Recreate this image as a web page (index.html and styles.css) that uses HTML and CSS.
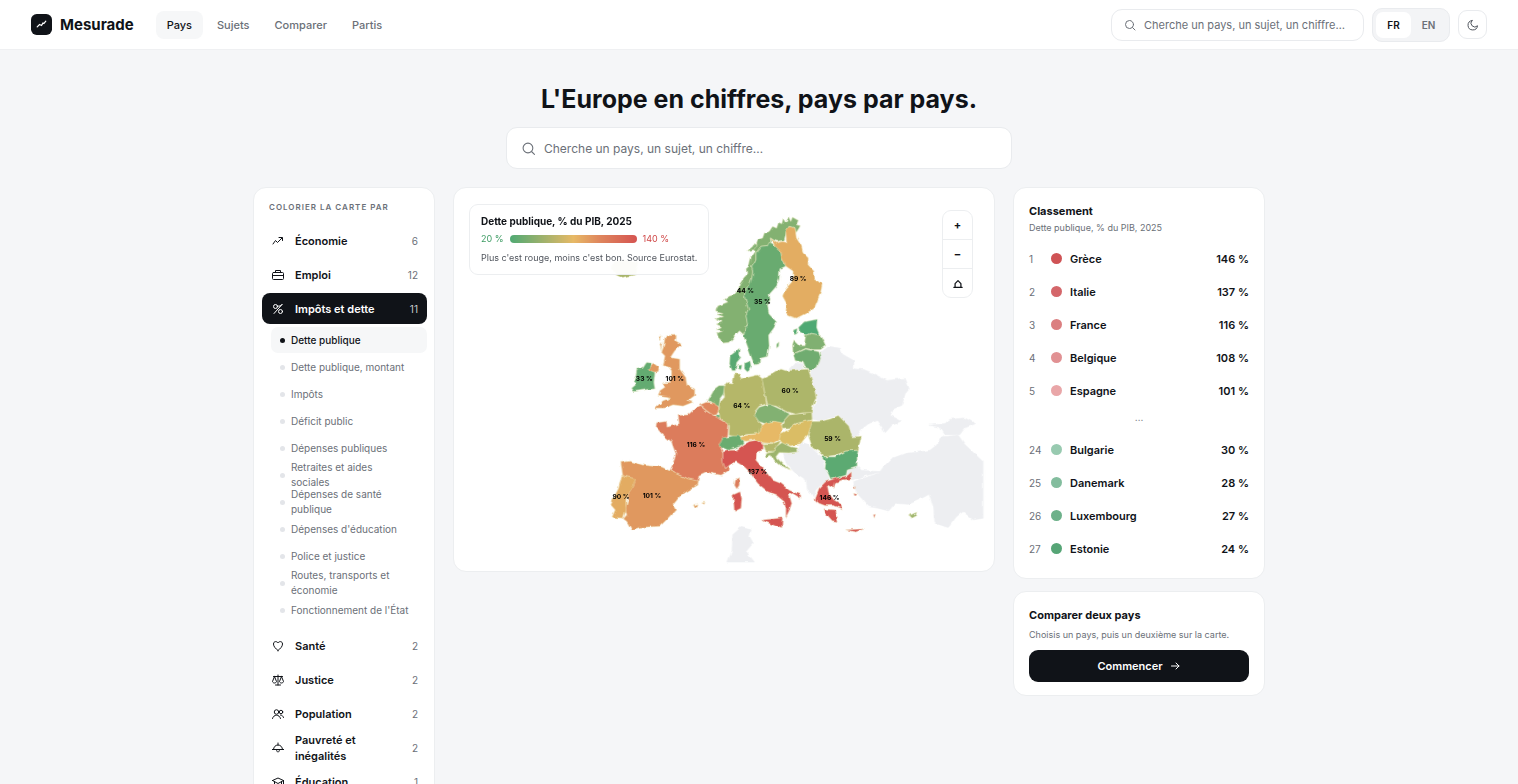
FILE: index.html
```html
<!DOCTYPE html>
<html lang="fr">
<head>
  <meta charset="UTF-8">
  <meta name="viewport" content="width=device-width, initial-scale=1.0">
  <title>Mesurade - L'Europe en chiffres</title>
  <link rel="stylesheet" href="styles.css">
</head>
<body>
  <header class="topbar">
    <a class="brand" href="#">
      <svg class="logo" viewBox="0 0 22 22"><rect width="22" height="22" rx="6" fill="#101318"/><path d="M6.500 13.500l2.500-2.500 2 1 1.500-2.500 1 .5 2-2.500" fill="none" stroke="#fff" stroke-width="1.300" stroke-linecap="round"/></svg>
      Mesurade
    </a>
    <nav class="nav">
      <a class="active" href="#">Pays</a>
      <a href="#">Sujets</a>
      <a href="#">Comparer</a>
      <a href="#">Partis</a>
    </nav>
    <label class="search search-small">
      <svg class="icon" viewBox="0 0 24 24"><circle cx="11" cy="11" r="8"/><path d="M17 17l5 5"/></svg>
      <input type="text" placeholder="Cherche un pays, un sujet, un chiffre…" aria-label="Recherche">
    </label>
    <div class="lang">
      <button class="on">FR</button>
      <button>EN</button>
    </div>
    <button class="theme" aria-label="Thème">
      <svg class="icon" viewBox="0 0 24 24"><path d="M10 3a7 7 0 0 0 11 10.500A9.500 9.500 0 1 1 10 3z"/></svg>
    </button>
  </header>

  <main class="page">
    <h1>L'Europe en chiffres, pays par pays.</h1>
    <label class="search search-big">
      <svg class="icon" viewBox="0 0 24 24"><circle cx="11" cy="11" r="9"/><path d="M18 18l5 5"/></svg>
      <input type="text" placeholder="Cherche un pays, un sujet, un chiffre…" aria-label="Recherche principale">
    </label>

    <div class="columns">
      <aside class="card topics">
        <h2>Colorier la carte par</h2>
        <button class="topic">
          <svg class="icon" viewBox="0 0 24 24"><path d="M2 18l5-7 4 4 9-9M14 5h7v6"/></svg>
          <span>Économie</span><small>6</small>
        </button>
        <button class="topic">
          <svg class="icon" viewBox="0 0 24 24"><rect x="1" y="7" width="22" height="14" rx="2"/><path d="M7 7V3h10v4M1 13h22"/></svg>
          <span>Emploi</span><small>12</small>
        </button>
        <button class="topic active">
          <svg class="icon" viewBox="0 0 24 24"><circle cx="7" cy="7" r="4"/><circle cx="17" cy="17" r="4"/><path d="M20 3L4 21M11 6c4 1 7 0 9-3"/></svg>
          <span>Impôts et dette</span><small>11</small>
        </button>
        <ul class="subtopics">
          <li><a class="active" href="#">Dette publique</a></li>
          <li><a href="#">Dette publique, montant</a></li>
          <li><a href="#">Impôts</a></li>
          <li><a href="#">Déficit public</a></li>
          <li><a href="#">Dépenses publiques</a></li>
          <li><a href="#">Retraites et aides sociales</a></li>
          <li><a href="#">Dépenses de santé publique</a></li>
          <li><a href="#">Dépenses d'éducation</a></li>
          <li><a href="#">Police et justice</a></li>
          <li><a href="#">Routes, transports et économie</a></li>
          <li><a href="#">Fonctionnement de l'État</a></li>
        </ul>
        <button class="topic">
          <svg class="icon" viewBox="0 0 24 24"><path d="M12 21C7 17 3 13 3 8c0-6 7-6 9-2 2-4 9-4 9 2 0 5-4 9-9 13z"/></svg>
          <span>Santé</span><small>2</small>
        </button>
        <button class="topic">
          <svg class="icon" viewBox="0 0 24 24"><path d="M12 2v20M7 22h10M3 5h18M5 5L1 15c1 4 7 4 8 0L5 5zM19 5l-4 10c1 4 7 4 8 0L19 5z"/></svg>
          <span>Justice</span><small>2</small>
        </button>
        <button class="topic">
          <svg class="icon" viewBox="0 0 24 24"><circle cx="9" cy="8" r="4.500"/><circle cx="18" cy="8" r="3.500"/><path d="M1 21c2-9 14-9 16 0M17 14c3 0 5 2 6 5"/></svg>
          <span>Population</span><small>2</small>
        </button>
        <button class="topic">
          <svg class="icon" viewBox="0 0 24 24"><path d="M0 15h24M3 15c0-5 4-9 9-9s9 4 9 9M12 6V2M9 15c0 7 6 7 6 0"/></svg>
          <span>Pauvreté et inégalités</span><small>2</small>
        </button>
        <button class="topic">
          <svg class="icon" viewBox="0 0 24 24"><path d="M1 9l11-5 11 5-11 6L1 9zM5 11v7c4 4 10 4 14 0v-7M23 9v7"/></svg>
          <span>Éducation</span><small>1</small>
        </button>
      </aside>

      <section class="card map">
        <svg class="europe" viewBox="0 0 1629 1155" role="img" aria-label="Carte de la dette publique en Europe">
          <defs>
            <filter id="coast" x="0" y="0" width="100%" height="100%" filterUnits="userSpaceOnUse">
              <feTurbulence type="fractalNoise" baseFrequency="0.06" numOctaves="1" seed="4"/>
              <feDisplacementMap in="SourceGraphic" scale="11" xChannelSelector="R" yChannelSelector="G"/>
            </filter>
          </defs>
          <g class="land" filter="url(#coast)">
            <!-- no data -->
            <g class="empty">
              <g transform="translate(861 366)">
                <path d="M212 205L218 180 240 170 245 130 270 112 305 118 310 135 345 155 345 180 375 182 395 190 425 205 445 215 500 208 512 240 500 255 490 290 465 300 455 320 490 338 460 350 440 372 430 358 415 335 390 345 370 360 345 395 335 380 315 340 298 318 245 337 215 330 218 310 235 270 222 235z"/>
                <path d="M150 180L168 162 192 165 196 182 155 186z"/>
                <path d="M572 350L620 345 635 332 680 328 712 345 680 358 665 378 620 378 605 355z"/>
              </g>
              <g transform="translate(801 696)">
                <path d="M188 105L235 100 245 70 268 78 290 100 308 115 318 150 325 165 330 185 305 200 290 215 285 235 265 215 262 185 225 160 205 140z"/>
                <path d="M382 170L390 155 415 145 425 155 460 158 490 160 440 172 402 185z"/>
                <path d="M405 190L430 180 480 165 495 145 520 120 560 105 605 100 635 95 655 80 670 55 720 50 740 78 795 130 795 300 765 305 735 280 715 295 690 328 650 315 645 260 632 228 600 245 570 258 530 255 510 278 480 270 450 265 420 230 408 210z"/>
                <path d="M40 350L65 328 95 335 90 355 102 375 80 400 105 432 25 432 38 400z"/>
              </g>
            </g>
            <!-- north -->
            <g transform="translate(711 36)">
              <path fill="#83b171" d="M88 420L100 432 118 430 135 412 150 395 158 402 163 408 168 385 175 375 170 350 178 330 172 310 165 290 168 270 180 258 188 235 190 215 187 200 200 180 200 160 215 140 235 138 245 125 243 115 255 122 265 125 285 122 292 95 300 80 318 85 320 100 328 88 334 78 322 75 328 62 310 52 305 65 298 50 290 70 282 55 278 72 268 68 262 85 250 80 240 95 225 100 220 115 205 120 200 135 190 150 198 155 185 175 180 195 170 205 172 225 160 240 150 255 148 270 135 285 120 290 105 300 115 308 85 320 78 335 100 340 80 345 102 352 78 358 98 368 80 375 96 382 80 390 100 395 82 402z"/>
              <path fill="#83b171" d="M172 155L190 140 196 128 204 134 194 150z"/>
              <path fill="#69ab70" d="M240 128L262 140 275 155 278 175 290 200 272 208 270 240 262 260 240 285 243 300 235 320 240 345 262 368 255 385 238 408 240 440 235 472 212 478 210 495 195 498 188 480 172 435 163 412 168 385 175 378 170 350 178 330 172 310 165 290 168 270 180 258 188 235 190 215 187 200 200 180 200 160 215 140 235 138zM262 435L270 428 268 442 262 447z"/>
              <path fill="#e3ad62" d="M243 115L262 130 280 125 292 128 290 95 300 80 318 85 322 115 338 140 342 160 358 175 357 195 375 215 378 238 400 255 395 280 385 305 375 328 355 340 322 357 300 350 290 340 292 312 280 290 288 270 310 245 312 215 290 200 278 175 275 155 258 140z"/>
              <path fill="#50a973" d="M328 385L345 368 385 360 383 385 392 408 365 402 350 408 332 398zM313 392L325 388 322 402 312 408z"/>
              <path fill="#80b071" d="M310 440L315 425 330 440 345 440 350 408 368 403 392 408 400 415 410 440 395 452 372 452 350 448 325 460 312 462z"/>
              <path fill="#6fac70" d="M312 462L328 460 350 450 390 458 395 475 385 505 365 512 348 505 342 490 318 485z"/>
              <path fill="#58a972" d="M122 470L135 460 150 447 148 470 155 475 142 490 138 515 128 515 120 495zM145 500L158 498 155 512 148 510zM165 492L182 485 185 500 175 520 165 510z"/>
            </g>
            <!-- west and centre -->
            <g transform="translate(441 396)">
              <path fill="#b5b769" d="M405 165L420 165 425 182 445 175 475 168 490 180 495 215 502 255 480 262 465 280 475 305 490 318 478 345 440 348 415 355 388 350 390 320 360 300 358 275 362 250 375 235 372 205 385 190 400 192z"/>
              <path fill="#adb66b" d="M488 180L520 165 545 150 560 155 628 150 642 195 652 235 640 265 638 282 610 282 590 287 565 280 530 262 505 258 495 215z"/>
              <path fill="#82b172" d="M463 285L480 265 510 256 530 265 572 285 555 305 545 315 520 308 505 318 478 308z"/>
              <path fill="#abb56b" d="M545 325L555 305 570 288 600 285 638 280 640 303 620 308 590 315 570 330 550 332z"/>
              <path fill="#e7b966" d="M418 358L440 350 478 345 482 325 500 312 525 308 545 312 550 335 543 360 520 375 490 372 465 362 440 368 420 362z"/>
              <path fill="#dabd65" d="M545 345L570 332 592 315 620 307 640 305 642 320 625 350 605 375 575 382 550 375 540 362z"/>
              <path fill="#b3b76a" d="M492 375L520 375 545 365 540 375 525 392 528 400 500 402z"/>
              <path fill="#9db46d" d="M497 405L525 400 530 385 548 372 575 385 595 388 597 400 570 403 540 402 530 415 555 440 575 455 550 445 525 425 515 410 500 418z"/>
              <path fill="#7db071" d="M325 245L345 210 358 200 375 200 372 225 362 238 358 270 345 255z"/>
              <path fill="#df875d" d="M300 258L320 250 345 253 358 270 352 288 340 290 320 275z"/>
              <path fill="#57a972" d="M350 288L360 288 360 302 350 298z"/>
              <path fill="#dc7b5b" d="M170 312L200 308 202 325 238 315 235 290 265 288 290 265 300 260 325 280 350 295 388 318 385 350 365 375 362 385 370 400 370 425 378 450 390 440 390 455 365 470 335 465 320 460 298 470 295 490 260 480 210 457 222 430 228 405 220 385 215 370 185 345 168 325zM408 485L420 480 420 500 412 512 405 500z"/>
              <path fill="#6aac70" d="M358 382L368 358 400 352 420 352 435 370 425 382 405 390 385 395z"/>
              <path fill="#d55451" d="M370 400L390 395 410 395 430 380 450 368 470 365 492 375 492 395 472 400 470 425 500 460 520 485 545 495 570 515 605 530 605 540 580 525 570 530 578 555 570 578 560 598 560 570 555 550 530 530 505 520 475 495 450 460 435 445 410 430 390 440 378 450 370 430zM490 605L520 602 550 598 548 632 520 620 495 610zM400 530L422 520 427 540 425 570 405 580 402 550z"/>
              <path fill="#e0985e" d="M62 432L90 428 130 440 185 445 210 457 260 480 297 488 295 500 265 518 240 535 220 560 228 575 200 605 180 625 120 628 95 635 80 610 70 602 80 590 75 570 85 540 80 520 95 480 68 472zM280 562L295 556 292 568zM306 554L316 552 314 558z"/>
              <path fill="#e3ac62" d="M65 470L80 475 108 480 95 510 85 525 78 545 78 575 70 600 35 598 45 575 32 560 45 530 55 510z"/>
              <path fill="#e0985e" d="M195 55L200 50 230 48 228 65 245 75 225 95 212 115 240 120 240 150 258 175 262 200 285 210 285 230 265 245 280 250 250 262 220 258 195 268 165 268 190 245 212 238 175 232 180 215 195 205 188 192 210 190 215 170 215 155 208 145 200 142 190 140 195 110 185 100 192 80zM142 150L160 132 178 145 175 158 160 160zM180 75L186 70 184 95zM178 52L186 50 182 62z"/>
              <path fill="#64ab71" d="M110 150L128 148 140 130 155 132 145 152 165 160 162 190 165 210 140 212 102 218 95 208 110 195 100 185 108 170z"/>
            </g>
            <!-- south east -->
            <g transform="translate(801 696)">
              <path fill="#abb56b" d="M267 48L280 8 305 8 335 0 358 -10 390 22 400 55 428 52 425 65 418 95 380 98 350 110 315 115 300 100 280 88z"/>
              <path fill="#5caa72" d="M308 115L350 115 380 98 418 95 415 115 415 145 385 155 382 170 355 178 335 182 325 160 318 150 320 135z"/>
              <path fill="#d55451" d="M290 235L300 210 320 190 350 180 385 172 398 160 398 182 370 185 350 192 345 210 325 200 330 225 345 245 370 260 372 272 345 262 318 262 300 255 288 245zM315 272L350 275 358 310 340 308 320 285zM380 335L437 332 410 342zM404 222L416 226 408 230zM464 290L470 288 467 300zM404 208L410 205 408 212z"/>
              <path fill="#9db46d" d="M570 293L595 282 592 292 578 300z"/>
            </g>
            <path fill="#a8b56c" d="M470 235L500 215 555 225 550 262 505 270 488 262z"/>
          </g>
          <g class="labels">
            <text x="879" y="316">44 %</text>
            <text x="930" y="349">35 %</text>
            <text x="1038" y="280">89 %</text>
            <text x="574" y="583">33 %</text>
            <text x="666" y="581">101 %</text>
            <text x="868" y="664">64 %</text>
            <text x="1014" y="619">60 %</text>
            <text x="1142" y="763">59 %</text>
            <text x="730" y="781">116 %</text>
            <text x="916" y="862">137 %</text>
            <text x="504" y="937">90 %</text>
            <text x="597" y="934">101 %</text>
            <text x="1133" y="940">146 %</text>
          </g>
        </svg>
        <div class="legend">
          <strong>Dette publique, % du PIB, 2025</strong>
          <div class="scale"><span class="low">20 %</span><i></i><span class="high">140 %</span></div>
          <p>Plus c'est rouge, moins c'est bon. Source Eurostat.</p>
        </div>
        <div class="zoom">
          <button aria-label="Zoomer">+</button>
          <button aria-label="Dézoomer">−</button>
          <button aria-label="Vue initiale">
            <svg class="icon home" viewBox="0 0 24 24"><path d="M5 20v-9l7-7 7 7v9M2 20h20"/></svg>
          </button>
        </div>
      </section>

      <div class="side">
        <section class="card panel">
          <h3>Classement</h3>
          <p>Dette publique, % du PIB, 2025</p>
          <table class="ranking">
            <tr><td>1</td><td><i class="dot r1"></i></td><th scope="row">Grèce</th><td>146 %</td></tr>
            <tr><td>2</td><td><i class="dot r2"></i></td><th scope="row">Italie</th><td>137 %</td></tr>
            <tr><td>3</td><td><i class="dot r3"></i></td><th scope="row">France</th><td>116 %</td></tr>
            <tr><td>4</td><td><i class="dot r4"></i></td><th scope="row">Belgique</th><td>108 %</td></tr>
            <tr><td>5</td><td><i class="dot r5"></i></td><th scope="row">Espagne</th><td>101 %</td></tr>
            <tr class="more"><td colspan="4">…</td></tr>
            <tr><td>24</td><td><i class="dot g4"></i></td><th scope="row">Bulgarie</th><td>30 %</td></tr>
            <tr><td>25</td><td><i class="dot g3"></i></td><th scope="row">Danemark</th><td>28 %</td></tr>
            <tr><td>26</td><td><i class="dot g2"></i></td><th scope="row">Luxembourg</th><td>27 %</td></tr>
            <tr><td>27</td><td><i class="dot g1"></i></td><th scope="row">Estonie</th><td>24 %</td></tr>
          </table>
        </section>
        <section class="card panel">
          <h3>Comparer deux pays</h3>
          <p class="hint">Choisis un pays, puis un deuxième sur la carte.</p>
          <button class="start">Commencer
            <svg class="icon" viewBox="0 0 24 24"><path d="M5 12h15M14 6l6 6-6 6"/></svg>
          </button>
        </section>
      </div>
    </div>
  </main>
</body>
</html>
```
FILE: styles.css
```css
* {
  box-sizing: border-box;
}
body {
  margin: 0;
  font-family: Inter, "Liberation Sans", sans-serif;
  font-size: 11px;
  color: #101318;
  background: #f5f6f8;
}
button, input {
  font: inherit;
  color: inherit;
}
button {
  padding: 0;
  border: 0;
  background: none;
  cursor: pointer;
}
a {
  color: inherit;
  text-decoration: none;
}
h1, h2, h3, p, ul {
  margin: 0;
}
.icon {
  flex: none;
  width: 12px;
  height: 12px;
  fill: none;
  stroke: currentColor;
  stroke-width: 2;
  stroke-linecap: round;
  stroke-linejoin: round;
}

/* top bar */
.topbar {
  display: flex;
  align-items: center;
  height: 50px;
  padding: 0 31px;
  background: #fff;
  border-bottom: 1px solid #eff0f2;
}
.brand {
  display: flex;
  align-items: center;
  gap: 8px;
  margin-right: 22px;
  font-size: 15px;
  font-weight: 700;
}
.logo {
  width: 21px;
  height: 21px;
}
.nav {
  display: flex;
  gap: 3px;
}
.nav a {
  padding: 0 11px;
  line-height: 28px;
  border-radius: 8px;
  font-weight: 500;
  color: #6b7078;
}
.nav a.active {
  color: #101318;
  background: #f6f7f8;
}
.search {
  display: flex;
  align-items: center;
  gap: 8px;
  background: #fff;
  border: 1px solid #e9ebee;
  border-radius: 11px;
  color: #6b7078;
}
.search input {
  flex: 1;
  min-width: 0;
  padding: 0;
  border: 0;
  outline: 0;
  background: none;
}
.search input::placeholder {
  color: #6b7078;
}
.search-small {
  width: 253px;
  height: 32px;
  margin-left: auto;
  padding: 0 12px;
}
.lang {
  display: flex;
  margin: 0 8px;
  padding: 3px;
  background: #f3f4f6;
  border: 1px solid #e9ebee;
  border-radius: 10px;
}
.lang button {
  width: 35px;
  height: 26px;
  border-radius: 7px;
  font-size: 10px;
  font-weight: 600;
  color: #6b7078;
}
.lang .on {
  color: #101318;
  background: #fff;
}
.theme {
  display: grid;
  place-items: center;
  width: 29px;
  height: 29px;
  border: 1px solid #e9ebee;
  border-radius: 9px;
  color: #50555d;
}

/* page */
.page {
  max-width: 1012px;
  margin: 0 auto;
  padding: 32px 0;
}
h1 {
  font-size: 25px;
  line-height: 34px;
  font-weight: 700;
  text-align: center;
}
.search-big {
  width: 50%;
  height: 42px;
  gap: 9px;
  margin: 11px auto 18px;
  padding: 0 15px;
  font-size: 12px;
}
.search-big .icon {
  width: 13px;
  height: 13px;
}
.columns {
  display: grid;
  grid-template-columns: 182px 1fr 252px;
  align-items: start;
  gap: 18px;
}
.card {
  background: #fff;
  border: 1px solid #eceef0;
  border-radius: 13px;
}

/* topics */
.topics {
  padding: 13px 7px 13px 8px;
}
.topics h2 {
  padding: 0 7px;
  margin-bottom: 12px;
  font-size: 8px;
  line-height: 12px;
  font-weight: 600;
  letter-spacing: 1px;
  text-transform: uppercase;
  color: #6b7078;
}
.topic {
  display: flex;
  align-items: center;
  gap: 11px;
  width: 100%;
  height: 31px;
  margin-bottom: 3px;
  padding: 0 9px 0 10px;
  border-radius: 8px;
  line-height: 16px;
  font-weight: 600;
  text-align: left;
}
.topic span {
  flex: 1;
}
.topic small {
  font-size: 10px;
  font-weight: 400;
  color: #6b7078;
}
.topic.active {
  color: #fff;
  background: #101318;
}
.topic.active small {
  color: #c8cacd;
}
.subtopics {
  padding: 0 0 6px 9px;
  list-style: none;
}
.subtopics a {
  display: flex;
  align-items: center;
  height: 26px;
  margin-bottom: 1px;
  padding: 0 16px 0 9px;
  border-radius: 7px;
  font-size: 10px;
  line-height: 15px;
  color: #6b7078;
}
.subtopics a::before {
  content: "";
  flex: none;
  width: 5px;
  height: 5px;
  margin-right: 6px;
  border-radius: 50%;
  background: #e3e5e9;
}
.subtopics .active {
  font-weight: 500;
  color: #101318;
  background: #f6f7f8;
}
.subtopics .active::before {
  background: #101318;
}

/* map */
.map {
  position: relative;
}
.europe {
  display: block;
  width: 100%;
}
.land path {
  stroke: rgba(243, 239, 198, 0.7);
  stroke-width: 2;
}
.land .empty path {
  fill: #edeef1;
  stroke: #edeef1;
}
.labels {
  font-size: 20px;
  font-weight: 700;
  text-anchor: middle;
}
.legend {
  position: absolute;
  top: 16px;
  left: 15px;
  padding: 8px 11px 7px;
  background: rgba(255, 255, 255, 0.96);
  border: 1px solid #eceef0;
  border-radius: 9px;
}
.legend strong {
  display: block;
  font-size: 10px;
  line-height: 16px;
}
.legend p {
  font-size: 9px;
  line-height: 18px;
  color: #50555d;
}
.scale {
  display: flex;
  align-items: center;
  gap: 6px;
  font-size: 9px;
  line-height: 20px;
}
.scale i {
  width: 127px;
  height: 8px;
  border-radius: 4px;
  background: linear-gradient(90deg, #50a973, #e7b966 50%, #df875d 70%, #d55451);
}
.low {
  color: #3f9d65;
}
.high {
  color: #cf4646;
}
.zoom {
  position: absolute;
  top: 22px;
  right: 21px;
  width: 31px;
  background: #fff;
  border: 1px solid #eceef0;
  border-radius: 9px;
}
.zoom button {
  display: block;
  width: 100%;
  height: 28px;
  font-weight: 700;
}
.zoom button + button {
  height: 29px;
  border-top: 1px solid #eceef0;
}
.zoom .home {
  width: 10px;
  height: 10px;
  stroke-width: 3;
  vertical-align: middle;
}

/* right column */
.side {
  display: grid;
  gap: 12px;
}
.panel {
  padding: 14px 15px 13px;
}
.panel h3 {
  font-size: 11px;
  line-height: 18px;
  font-weight: 700;
}
.panel p {
  font-size: 9px;
  line-height: 16px;
  color: #6b7078;
}
.ranking {
  width: 100%;
  margin-top: 6px;
  border-collapse: collapse;
}
.ranking td, .ranking th {
  height: 33px;
  padding: 0;
  text-align: left;
  font-weight: 600;
}
.ranking td:first-child {
  width: 22px;
  font-size: 10px;
  font-weight: 400;
  color: #6b7078;
}
.ranking td:nth-child(2) {
  width: 19px;
}
.ranking td:last-child {
  text-align: right;
}
.ranking .more td {
  height: 26px;
  padding-bottom: 6px;
  text-align: center;
}
.dot {
  display: block;
  width: 11px;
  height: 11px;
  border-radius: 50%;
}
.r1 { background: #cf5355; }
.r2 { background: #d4666a; }
.r3 { background: #db7f80; }
.r4 { background: #e19193; }
.r5 { background: #e9a6a8; }
.g4 { background: #98cab0; }
.g3 { background: #83bd9e; }
.g2 { background: #6db18a; }
.g1 { background: #56a576; }
.panel .hint {
  margin: 3px 0 7px;
}
.start {
  display: flex;
  align-items: center;
  justify-content: center;
  gap: 6px;
  width: 100%;
  height: 32px;
  border-radius: 9px;
  font-weight: 600;
  color: #fff;
  background: #101318;
}
```
